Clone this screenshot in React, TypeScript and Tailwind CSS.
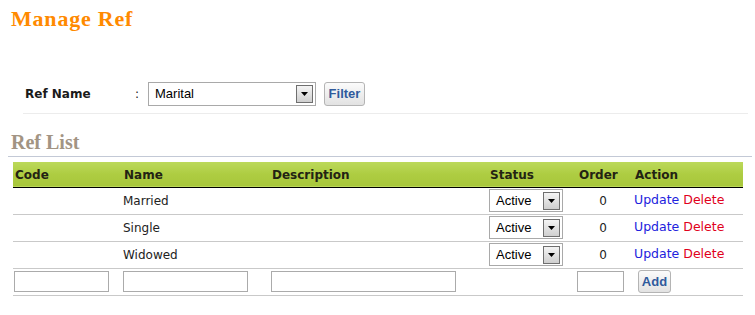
import React from 'react';

const rows = [
  { code: '', name: 'Married', desc: '', status: 'Active', order: 0 },
  { code: '', name: 'Single', desc: '', status: 'Active', order: 0 },
  { code: '', name: 'Widowed', desc: '', status: 'Active', order: 0 },
];

function DropArrow() {
  return (
    <div className="flex h-[18px] w-[17px] items-center justify-center border border-[#6f6f6f] bg-gradient-to-b from-[#f4f4f4] to-[#cfcfcf]">
      <svg width="7" height="4" viewBox="0 0 7 4">
        <path d="M0 0h7L3.5 4z" fill="#000" />
      </svg>
    </div>
  );
}

function FakeSelect({ value, className }: { value: string; className: string }) {
  return (
    <div
      className={`flex items-center justify-between border border-[#a9a9a9] bg-white pl-[6px] pr-[2px] font-['Liberation_Sans',Arial,sans-serif] text-[13px] text-black ${className}`}
    >
      <span>{value}</span>
      <DropArrow />
    </div>
  );
}

function GrayButton({ label, className }: { label: string; className: string }) {
  return (
    <button
      className={`flex items-center justify-center rounded-[3px] border border-[#b4b4b4] bg-gradient-to-b from-[#fbfbfb] to-[#e2e2e2] font-['Liberation_Sans',Arial,sans-serif] text-[13px] font-bold text-[#2f5a9c] ${className}`}
    >
      {label}
    </button>
  );
}

export default function App() {
  return (
    <div className="h-[315px] w-[755px] bg-white font-['DejaVu_Sans',Verdana,sans-serif] text-[12px] text-[#222]">
      {/* Title */}
      <h1 className="pl-[11px] pt-[6px] font-['Liberation_Serif',Georgia,serif] text-[22px] font-bold leading-[26px] tracking-[0.8px] text-[#ff8a00]">
        Manage Ref
      </h1>

      {/* Filter */}
      <div className="ml-[23px] mr-[7px] mt-[50px] border-b border-[#ececec] pb-[7px]">
        <div className="flex h-[24px] items-center">
          <div className="w-[112px] pl-[2px] font-bold text-[#1a1a1a]">Ref Name</div>
          <div className="w-[13px] text-[#1a1a1a]">:</div>
          <FakeSelect value="Marital" className="h-[24px] w-[168px]" />
          <GrayButton label="Filter" className="ml-[8px] h-[24px] w-[41px]" />
        </div>
      </div>

      {/* Ref List */}
      <div className="ml-[8px] mr-[3px] mt-[18px] border-b border-[#c3c9d6] pb-[4px]">
        <h2 className="pl-[3px] font-['Liberation_Serif',Georgia,serif] text-[20px] font-bold leading-[20px] text-[#a29483]">
          Ref List
        </h2>
      </div>

      <table className="ml-[13px] mt-[5px] w-[730px] table-fixed border-collapse">
        <thead>
          <tr className="h-[25px] border-b border-black bg-gradient-to-b from-[#bcd95a] via-[#aecd42] to-[#a8c73b] text-left font-bold text-[#232313]">
            <th className="w-[109px] pl-[2px] pt-[1px]">Code</th>
            <th className="w-[148px] pl-[2px] pt-[1px]">Name</th>
            <th className="w-[218px] pl-[2px] pt-[1px]">Description</th>
            <th className="w-[89px] pl-[2px] pt-[1px]">Status</th>
            <th className="w-[56px] pl-[2px] pt-[1px]">Order</th>
            <th className="w-[110px] pl-[2px] pt-[1px]">Action</th>
          </tr>
        </thead>
        <tbody>
          {rows.map((r) => (
            <tr key={r.name} className="h-[27px] border-b border-[#c9c9c9]">
              <td className="pl-[2px]">{r.code}</td>
              <td className="pl-[1px]">{r.name}</td>
              <td className="pl-[2px]">{r.desc}</td>
              <td className="pl-[1px]">
                <FakeSelect value={r.status} className="h-[23px] w-[74px]" />
              </td>
              <td className="pr-[26px] text-right">{r.order}</td>
              <td className="pl-[1px] whitespace-nowrap text-[12.5px]">
                <a className="text-[#2222dd]">Update</a>{' '}
                <a className="text-[#e0001b]">Delete</a>
              </td>
            </tr>
          ))}
          <tr className="h-[27px] border-b border-[#c9c9c9]">
            <td className="pl-[1px]">
              <input className="block h-[21px] w-[95px] border border-[#ababab] bg-white" />
            </td>
            <td className="pl-[1px]">
              <input className="block h-[21px] w-[125px] border border-[#ababab] bg-white" />
            </td>
            <td className="pl-[1px]">
              <input className="block h-[21px] w-[185px] border border-[#ababab] bg-white" />
            </td>
            <td></td>
            <td>
              <input className="block h-[21px] w-[47px] border border-[#ababab] bg-white" />
            </td>
            <td className="pl-[5px]">
              <GrayButton label="Add" className="h-[23px] w-[33px]" />
            </td>
          </tr>
        </tbody>
      </table>
    </div>
  );
}
